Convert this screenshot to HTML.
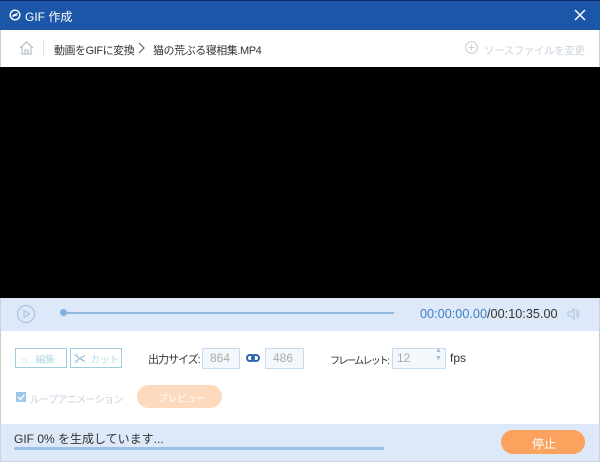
<!DOCTYPE html>
<html><head><meta charset="utf-8"><style>
*{margin:0;padding:0;box-sizing:border-box}
body{width:600px;height:462px;overflow:hidden;background:#fff;font-family:"Liberation Sans","Noto Sans CJK JP",sans-serif;position:relative}
.abs{position:absolute}
.t{font-size:12px;white-space:nowrap}
.c{font-size:11px;letter-spacing:-0.45px}
</style></head><body>
<div class="abs" style="left:0;top:0;width:600px;height:30px;background:#1c56a9;border-top:1px solid #0d2f66"></div>
<svg class="abs" style="left:9px;top:9px" width="12" height="12" viewBox="0 0 12 12"><circle cx="6" cy="6" r="4.8" fill="none" stroke="#fff" stroke-width="1.4"/><path d="M3.5 6.5 L8.5 4.5 M3.5 7.5 L8.5 5.8" stroke="#fff" stroke-width="1"/></svg>
<div class="abs t" style="left:25px;top:8px;color:#fff;font-size:12px">GIF 作成</div>
<svg class="abs" style="left:574px;top:9px" width="12" height="12"><path d="M1 1L11 11M11 1L1 11" stroke="#fff" stroke-width="1.5"/></svg>
<div class="abs" style="left:0;top:30px;width:600px;height:37px;background:#fff;border-left:1px solid #ccc;border-right:1px solid #ccc"></div>
<svg class="abs" style="left:19px;top:41px" width="15" height="14" viewBox="0 0 15 14"><path d="M1 7L7.5 1L14 7M3 6V13H12V6M6 13V9H9V13" fill="none" stroke="#b8c0c8" stroke-width="1.2"/></svg>
<div class="abs" style="left:43px;top:40px;width:1px;height:16px;background:#e4e4e4"></div>
<div class="abs t c" style="left:54px;top:42px;color:#333">動画をGIFに変換</div>
<svg class="abs" style="left:138px;top:42px" width="8" height="12"><path d="M1 1L6 6L1 11" fill="none" stroke="#666" stroke-width="1.2"/></svg>
<div class="abs t c" style="left:153px;top:42px;color:#333">猫の荒ぶる寝相集.MP4</div>
<svg class="abs" style="left:465px;top:41px" width="13" height="13"><circle cx="6.5" cy="6.5" r="5.8" fill="none" stroke="#ccc"/><path d="M6.5 3.5V9.5M3.5 6.5H9.5" stroke="#ccc"/></svg>
<div class="abs t" style="left:484px;top:43px;color:#ccd4dc;font-size:10.5px;letter-spacing:-0.4px">ソースファイルを変更</div>
<div class="abs" style="left:0;top:67px;width:600px;height:231px;background:#000"></div>
<div class="abs" style="left:0;top:298px;width:600px;height:33px;background:#dde9f8;border-left:1px solid #c8d4e2;border-right:1px solid #c8d4e2"></div>
<svg class="abs" style="left:16px;top:304px" width="20" height="20"><circle cx="10" cy="10" r="8.5" fill="none" stroke="#a9c3e0" stroke-width="1.2"/><path d="M8 6.5V13.5L13.5 10Z" fill="none" stroke="#a9c3e0"/></svg>
<div class="abs" style="left:63px;top:312px;width:331px;height:2px;background:#8fb8e0"></div>
<div class="abs" style="left:60px;top:309px;width:7px;height:7px;border-radius:50%;background:#7fb0e0"></div>
<div class="abs t" style="left:420px;top:307px;font-size:12.7px;color:#3e7fc4">00:00:00.00<span style="color:#333">/00:10:35.00</span></div>
<svg class="abs" style="left:566px;top:307px" width="14" height="14"><path d="M2 5H5L8 2V12L5 9H2Z" fill="none" stroke="#a9c3e0"/><path d="M10 4Q12 7 10 10M11.5 2.5Q14 7 11.5 11.5" fill="none" stroke="#a9c3e0"/></svg>
<div class="abs" style="left:0;top:331px;width:600px;height:93px;border-left:1px solid #ccc;border-right:1px solid #ccc"></div>
<div class="abs" style="left:15px;top:348px;width:52px;height:20px;border:1px solid #9fcfdf"></div>
<div class="abs t" style="left:20px;top:351px;color:#b7dbe6;font-size:10px;letter-spacing:-0.5px">☼ &nbsp;&nbsp;編集</div>
<div class="abs" style="left:70px;top:348px;width:52px;height:20px;border:1px solid #9fcfdf"></div>
<div class="abs t" style="left:74px;top:350px;color:#b7dbe6;font-size:10px;letter-spacing:-0.5px"><span style="color:#5da8c8;font-size:12px">✂</span> &nbsp;カット</div>
<div class="abs t c" style="left:148px;top:351px;color:#333;letter-spacing:-1px">出力サイズ:</div>
<div class="abs" style="left:202px;top:348px;width:38px;height:21px;border:1px solid #c8dcef;background:#f4f8fc"></div>
<div class="abs t" style="left:210px;top:351px;color:#aaa">864</div>
<svg class="abs" style="left:246px;top:353px" width="14" height="10"><rect x="1" y="2" width="7" height="6" rx="3" fill="none" stroke="#2a64b0" stroke-width="2"/><rect x="6" y="2" width="7" height="6" rx="3" fill="none" stroke="#2a64b0" stroke-width="2"/></svg>
<div class="abs" style="left:265px;top:348px;width:39px;height:21px;border:1px solid #c8dcef;background:#f4f8fc"></div>
<div class="abs t" style="left:273px;top:351px;color:#aaa">486</div>
<div class="abs t" style="left:330px;top:352px;color:#333;font-size:10px;letter-spacing:-1.8px">フレームレット:</div>
<div class="abs" style="left:392px;top:348px;width:54px;height:21px;border:1px solid #c8dcef;background:#f4f8fc"></div>
<div class="abs t" style="left:397px;top:351px;color:#aaa">12</div>
<div class="abs t" style="left:435px;top:347px;color:#9bbfe0;font-size:7px;line-height:8px">▲<br>▼</div>
<div class="abs t" style="left:450px;top:351px;color:#333">fps</div>
<div class="abs" style="left:16px;top:392px;width:10px;height:10px;background:#9ec8e8"></div>
<svg class="abs" style="left:16px;top:392px" width="10" height="10"><path d="M2 5L4.5 7.5L8.5 2.5" fill="none" stroke="#fff" stroke-width="1.3"/></svg>
<div class="abs t" style="left:30px;top:391px;color:#c4d2de;font-size:10px;letter-spacing:-0.6px">ループアニメーション</div>
<div class="abs" style="left:137px;top:385px;width:85px;height:23px;border-radius:12px;background:#fdd9bd"></div>
<div class="abs t" style="left:158px;top:390px;color:#fff;font-size:10px;letter-spacing:-0.5px">プレビュー</div>
<div class="abs" style="left:0;top:424px;width:600px;height:38px;background:#dde9f8;border:1px solid #c8d4e2;border-top:none"></div>
<div class="abs t" style="left:14px;top:430px;color:#333">GIF 0% を生成しています...</div>
<div class="abs" style="left:14px;top:447px;width:370px;height:3px;background:#9cc1e6"></div>
<div class="abs" style="left:501px;top:430px;width:84px;height:24px;border-radius:12px;background:#fba35e"></div>
<div class="abs t" style="left:532px;top:435px;color:#fff;font-size:12px">停止</div>
</body></html>
